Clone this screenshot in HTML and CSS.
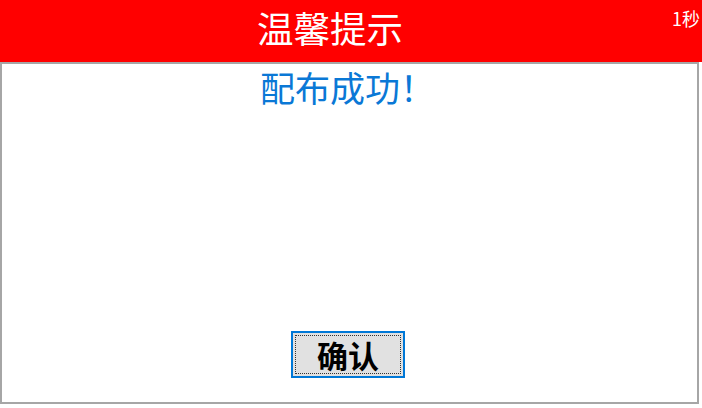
FILE: index.html
```html
<!DOCTYPE html>
<html lang="zh">
<head>
<meta charset="utf-8">
<link rel="stylesheet" href="styles.css">
</head>
<body>
<div class="dialog">
  <div class="header">
    <div class="title">温馨提示</div>
    <div class="timer">1秒</div>
  </div>
  <div class="content">
    <div class="message">配布成功！</div>
    <button class="ok"><span class="ok-inner">确认</span></button>
  </div>
</div>
</body>
</html>
```
FILE: styles.css
```css
html, body {
  margin: 0;
  padding: 0;
  background: #ffffff;
  font-family: "Noto Sans CJK SC", "Noto Sans", sans-serif;
}
.dialog {
  width: 702px;
  height: 408px;
  display: flex;
  flex-direction: column;
}
.header {
  height: 62px;
  background: #ff0000;
  display: flex;
  align-items: flex-start;
  justify-content: space-between;
  flex-shrink: 0;
}
.title {
  color: #ffffff;
  font-size: 36.5px;
  line-height: 56px;
  margin-left: 257px;
  margin-top: 0;
}
.timer {
  color: #ffffff;
  font-size: 18px;
  line-height: 22px;
  margin-top: 7px;
  margin-right: 2px;
}
.content {
  width: 695px;
  height: 338px;
  border: 2px solid #a6a6a6;
  display: flex;
  flex-direction: column;
  align-items: center;
  justify-content: space-between;
  background: #ffffff;
}
.message {
  align-self: flex-start;
  margin-left: 258px;
  margin-top: 0;
  color: #0a78d6;
  font-size: 35px;
  line-height: 46px;
}
.ok {
  width: 114px;
  height: 47px;
  margin-bottom: 24px;
  margin-left: -3px;
  padding: 2px;
  border: 2px solid #0078d7;
  background: #e1e1e1;
  font-family: inherit;
  display: flex;
  align-items: stretch;
  justify-content: stretch;
}
.ok-inner {
  flex: 1;
  border: 1px dotted #333333;
  display: flex;
  align-items: center;
  justify-content: center;
  font-size: 31px;
  font-weight: bold;
  color: #000000;
  line-height: 1;
}
```
